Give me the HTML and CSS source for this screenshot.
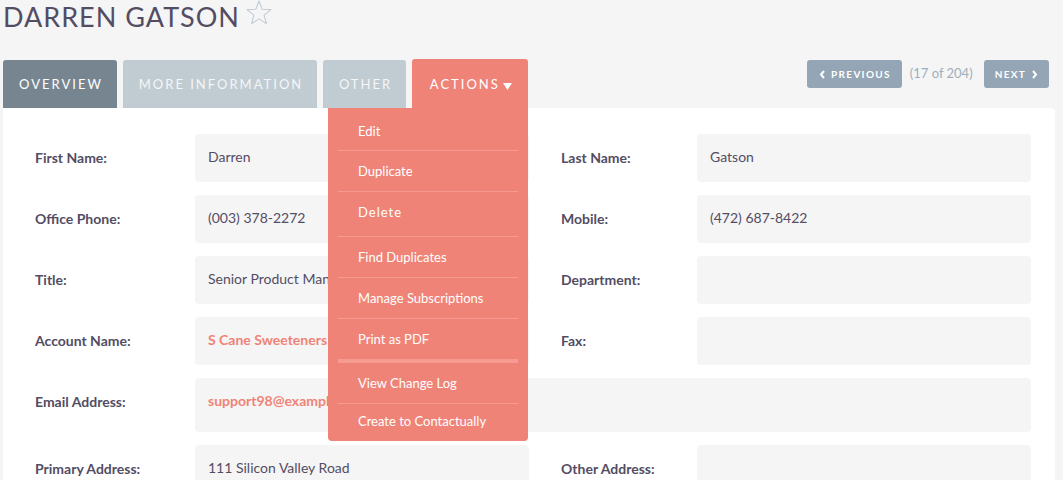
FILE: index.html
```html
<!DOCTYPE html>
<html>
<head>
<meta charset="utf-8">
<link rel="stylesheet" href="styles.css">
</head>
<body>
<div class="page">
  <h2 class="title">DARREN GATSON<svg class="star" width="26" height="25" viewBox="0 0 26 25"><polygon points="13,1 16.2,9.2 25,9.6 18.1,15.1 20.5,23.8 13,18.9 5.5,23.8 7.9,15.1 1,9.6 9.8,9.2" fill="none" stroke="#c3ccd4" stroke-width="1.1" stroke-linejoin="round"/></svg></h2>

  <div class="bar">
    <ul class="tabs">
      <li class="tab tab-active tab-overview">OVERVIEW</li>
      <li class="tab tab-more">MORE INFORMATION</li>
      <li class="tab tab-other">OTHER</li>
      <li class="tab tab-actions">ACTIONS <svg class="caret" width="9" height="8" viewBox="0 0 9 8"><polygon points="0,1 9,1 4.5,8" fill="#fff"/></svg>
        <ul class="menu">
          <li class="item item-first">Edit</li>
          <li class="item">Duplicate</li>
          <li class="item item-delete">Delete</li>
          <li class="item">Find Duplicates</li>
          <li class="item">Manage Subscriptions</li>
          <li class="item item-thick">Print as PDF</li>
          <li class="item">View Change Log</li>
          <li class="item item-last">Create to Contactually</li>
        </ul>
      </li>
    </ul>
    <div class="pager">
      <span class="pbtn"><svg width="7" height="9" viewBox="0 0 7 9"><polyline points="5,1 2,4.5 5,8" fill="none" stroke="#fff" stroke-width="2"/></svg>PREVIOUS</span>
      <span class="count">(17 of 204)</span>
      <span class="pbtn">NEXT<svg width="7" height="9" viewBox="0 0 7 9"><polyline points="2,1 5,4.5 2,8" fill="none" stroke="#fff" stroke-width="2"/></svg></span>
    </div>
  </div>

  <div class="panel">
    <div class="row">
      <div class="label">First Name:</div>
      <div class="value">Darren</div>
      <div class="spacer"></div>
      <div class="label">Last Name:</div>
      <div class="value">Gatson</div>
    </div>
    <div class="row">
      <div class="label">Office Phone:</div>
      <div class="value">(003) 378-2272</div>
      <div class="spacer"></div>
      <div class="label">Mobile:</div>
      <div class="value">(472) 687-8422</div>
    </div>
    <div class="row">
      <div class="label">Title:</div>
      <div class="value">Senior Product Manager</div>
      <div class="spacer"></div>
      <div class="label">Department:</div>
      <div class="value"></div>
    </div>
    <div class="row">
      <div class="label">Account Name:</div>
      <div class="value link">S Cane Sweeteners Ltd</div>
      <div class="spacer"></div>
      <div class="label">Fax:</div>
      <div class="value"></div>
    </div>
    <div class="row">
      <div class="label">Email Address:</div>
      <div class="value value-wide link">support98@example.tw</div>
    </div>
    <div class="row">
      <div class="label">Primary Address:</div>
      <div class="value">111 Silicon Valley Road</div>
      <div class="spacer"></div>
      <div class="label">Other Address:</div>
      <div class="value"></div>
    </div>
  </div>
</div>
</body>
</html>
```

FILE: styles.css
```css
* { box-sizing: border-box; }
html, body { margin: 0; padding: 0; }
body {
  background: #f5f5f5;
  font-family: Lato, "Open Sans", sans-serif;
  color: #534d64;
  width: 1063px;
  height: 480px;
  overflow: hidden;
}
.page { position: relative; }
.title {
  margin: 0;
  padding: 1px 0 0 3px;
  height: 59px;
  font-size: 27px;
  font-weight: 400;
  letter-spacing: 1px;
  line-height: 32px;
  color: #534d64;
  display: flex;
  align-items: flex-start;
}
.star { margin-left: 6px; margin-top: -1px; }

.bar {
  display: flex;
  align-items: flex-start;
  padding: 0 14px 0 3px;
  height: 49px;
}
.tabs {
  list-style: none;
  margin: 0;
  padding: 0;
  display: flex;
  align-items: flex-end;
  gap: 6px;
  height: 49px;
}
.tab {
  height: 48px;
  padding: 0 0 0 2px;
  text-align: center;
  background: #c0cbd2;
  color: #f5f6f7;
  font-size: 13px;
  letter-spacing: 2px;
  line-height: 48px;
  border-radius: 3px 3px 0 0;
  white-space: nowrap;
}
.tab-overview { width: 114px; }
.tab-more { width: 194px; }
.tab-other { width: 83px; }
.tab-active { background: #778591; color: #fff; }
.tab-actions {
  position: relative;
  width: 116px;
  background: #f08377;
  color: #fff;
  height: 49px;
  line-height: 50px;
}
.caret { vertical-align: -1px; margin-left: -2px; }

.menu {
  position: absolute;
  top: 49px;
  left: -84px;
  width: 200px;
  margin: 0;
  padding: 3px 10px 0;
  list-style: none;
  background: #f08377;
  border-radius: 0 0 4px 4px;
  z-index: 5;
  text-align: left;
}
.item {
  height: 41px;
  line-height: 41px;
  padding-left: 20px;
  font-size: 13px;
  letter-spacing: 0;
  color: #fff;
  border-bottom: 1px solid #f59a90;
}
.item-first { height: 40px; line-height: 40px; }
.item-delete { height: 45px; line-height: 41px; letter-spacing: 1px; }
.item-thick { height: 44px; line-height: 41px; border-bottom: 4px solid #f69b91; }
.item-last { height: 37px; line-height: 35px; border-bottom: none; }

.pager {
  margin-left: auto;
  display: flex;
  align-items: center;
  height: 28px;
  margin-top: 1px;
}
.pbtn {
  display: flex;
  align-items: center;
  gap: 5px;
  height: 28px;
  padding: 0 11px 0 12px;
  background: #94a6b5;
  color: #fff;
  font-size: 10px;
  font-weight: 700;
  letter-spacing: 1.3px;
  border-radius: 3px;
}
.pbtn:last-child { padding: 0 11px; }
.count {
  color: #9dafbe;
  font-size: 13px;
  margin: 0 11px 0 8px;
  position: relative;
  top: -1px;
}

.panel {
  margin: 0 8px 0 3px;
  background: #fff;
  border-radius: 0 4px 0 0;
  padding: 26px 24px 20px 32px;
  display: flex;
  flex-direction: column;
  gap: 13px;
  height: 380px;
}
.row {
  display: grid;
  grid-template-columns: 160px 334px 32px 136px 334px;
}
.label {
  font-size: 14px;
  font-weight: 700;
  line-height: 16px;
  padding-top: 16px;
  color: #534d64;
}
.value {
  background: #f5f5f5;
  border-radius: 4px;
  min-height: 48px;
  padding: 15px 13px;
  font-size: 14px;
  line-height: 16px;
  color: #534d64;
  white-space: nowrap;
  overflow: hidden;
}
.value-wide { grid-column: 2 / 6; min-height: 54px; }
.link { color: #f08377; font-weight: 700; }
```
